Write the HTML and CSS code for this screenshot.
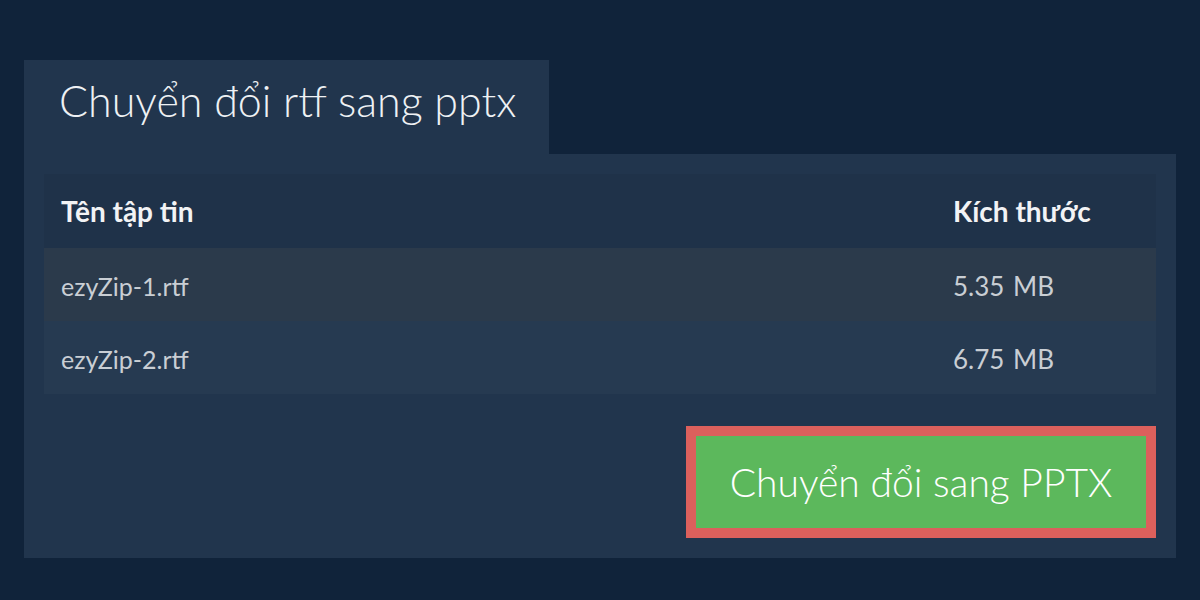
FILE: index.html
```html
<!DOCTYPE html>
<html lang="vi">
<head>
<meta charset="utf-8">
<link rel="stylesheet" href="styles.css">
</head>
<body>
<div class="wrap">
  <div class="tab"><h1 class="title">Chuyển đổi rtf sang pptx</h1></div>
  <div class="panel">
    <div class="table">
      <div class="row head"><div class="cell">Tên tập tin</div><div class="cell">Kích thước</div></div>
      <div class="row odd"><div class="cell">ezyZip-1.rtf</div><div class="cell size">5.35 MB</div></div>
      <div class="row even"><div class="cell">ezyZip-2.rtf</div><div class="cell size">6.75 MB</div></div>
    </div>
    <div class="actions">
      <button class="convert">Chuyển đổi sang PPTX</button>
    </div>
  </div>
</div>
</body>
</html>
```

FILE: styles.css
```css
html, body {
  margin: 0;
  padding: 0;
  background: #10233a;
  font-family: Lato, "Liberation Sans", sans-serif;
}
.wrap {
  padding: 60px 24px 0 24px;
}
.tab {
  width: 525px;
  height: 94px;
  background: #21354d;
  box-sizing: border-box;
  padding-left: 35px;
  display: flex;
  align-items: center;
}
.title {
  margin: 0;
  font-family: "Lato Light", Lato, "Liberation Sans", sans-serif;
  font-weight: 300;
  font-size: 43px;
  color: #eef1f4;
  line-height: 1;
  padding-bottom: 14px;
}
.panel {
  background: #21354d;
  padding: 20px 20px 20px 20px;
}
.table {
  display: flex;
  flex-direction: column;
}
.row {
  display: grid;
  grid-template-columns: 1fr 186px;
  align-items: center;
  padding: 3px 17px 0 17px;
  box-sizing: border-box;
  height: 73px;
  font-size: 25px;
}
.row.head {
  height: 74px;
  padding-top: 0;
  background: #1f3249;
  color: #f2f3f5;
  font-weight: 700;
  font-size: 28px;
}
.row.odd {
  background: #2b3a4b;
  color: #c9ced4;
}
.row.even {
  background: #263a51;
  color: #c9ced4;
  height: 73px;
  padding-top: 2px;
}
.size {
  font-size: 26px;
  word-spacing: 2px;
}
.actions {
  display: flex;
  justify-content: flex-end;
  padding-top: 32px;
}
.convert {
  width: 470px;
  height: 112px;
  background: #5cb85c;
  border: 10px solid #dc605c;
  color: #ffffff;
  font-family: "Lato Light", Lato, "Liberation Sans", sans-serif;
  font-weight: 300;
  font-size: 39px;
  padding: 0;
  margin: 0;
  cursor: pointer;
}
```
